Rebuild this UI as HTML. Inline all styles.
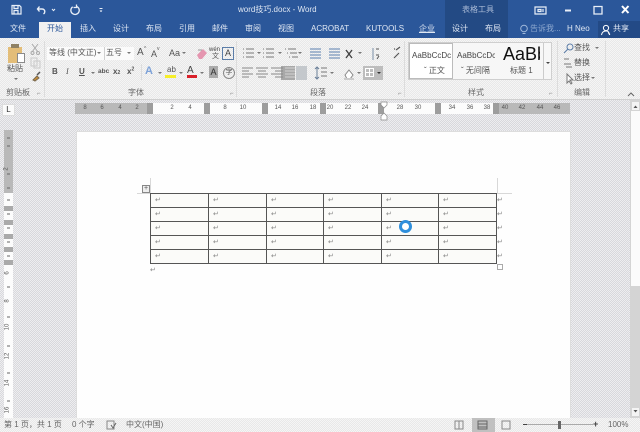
<!DOCTYPE html>
<html><head><meta charset="utf-8"><style>
html,body{margin:0;padding:0}
body{width:640px;height:432px;overflow:hidden;position:relative;background:#e4e4e4;font-family:"Liberation Sans","Noto Sans CJK SC",sans-serif;font-size:8px;color:#555}
.a{position:absolute}
.t{position:absolute;white-space:nowrap;line-height:1}
.w{color:#dfe7f3}
.dith{background-color:#e2e2e5;background-image:conic-gradient(#d8d8dc 25%,#eeeef0 0 50%,#d8d8dc 0 75%,#eeeef0 0);background-size:2px 2px}
.dl{background-color:#eeeeee;background-image:conic-gradient(#e8e8e8 25%,#f5f5f5 0 50%,#e8e8e8 0 75%,#f5f5f5 0);background-size:2px 2px}
.sep{position:absolute;top:41px;height:56px;width:1px;background:#dcdcdc}
.rn{position:absolute;top:104px;font-size:6px;line-height:9px;color:#555;transform:translateX(-50%)}
.mk{position:absolute;top:103px;height:11px;width:6px;background:#9d9d9d}
.cr{position:absolute;font-size:7px;color:#888;line-height:1}
.bl{position:absolute;background:#555}
.dd{position:absolute;width:0;height:0;border:2px solid transparent;border-top:2.5px solid #777;border-bottom:0}
.vn{position:absolute;left:5px;font-size:6px;line-height:6px;color:#555;transform:rotate(-90deg)}
svg{position:absolute;overflow:visible}
</style></head><body>

<!-- title bar -->
<div class="a" style="left:0;top:0;width:640px;height:38px;background:#2b579a"></div>
<div class="a" style="left:445px;top:0;width:63px;height:38px;background:#234a84"></div>
<div class="a" style="left:598px;top:21px;width:42px;height:17px;background:#234a86"></div>

<svg style="left:0;top:0" width="640" height="20" fill="none" stroke="#e8eef7" stroke-width="1.2">
<path d="M12 5.500h7.500l1.500 1.500v7h-9zM14 5.500v3h4v-3M14 14v-3.500h4V14"/>
<path d="M39.500 6.500l-2 2.500 2 2.500M38 9h4c2 0 2.800 1.300 2.800 2.600 0 1-.5 1.800-1.300 2.400" stroke-width="1.400"/>
<path d="M52 9l1.500 1.600L55 9" stroke-width="1"/>
<path d="M76 6.200a4.200 4.200 0 1 1-3.300.6M76.500 4.500v3h-3" stroke-width="1.300"/>
<path d="M99.500 8.500h3M100 10.500l1 1 1-1" stroke-width=".9"/>
<path d="M535 7h11v7h-11zM538 9.500h3v2h-3zM543 9v3" stroke-width="1.200"/>
<path d="M565 10.500h6" stroke-width="2"/>
<path d="M594 6.500h8v7.500h-8z" stroke-width="1.300"/>
<path d="M622 6l6.500 7M628.500 6l-6.500 7" stroke-width="2" stroke="#fff"/>
</svg>
<div class="t w" style="left:238px;top:6px;font-size:8px">word技巧.docx - Word</div>
<div class="t w" style="left:462px;top:6px;font-size:8px;color:#a9bad6">表格工具</div>

<!-- tabs -->
<div class="a" style="left:39px;top:22px;width:32px;height:17px;background:#f1f1f1"></div>
<div class="t w" style="left:10px;top:25px">文件</div>
<div class="t" style="left:47px;top:25px;color:#2b579a">开始</div>
<div class="t w" style="left:80px;top:25px">插入</div>
<div class="t w" style="left:113px;top:25px">设计</div>
<div class="t w" style="left:146px;top:25px">布局</div>
<div class="t w" style="left:179px;top:25px">引用</div>
<div class="t w" style="left:212px;top:25px">邮件</div>
<div class="t w" style="left:245px;top:25px">审阅</div>
<div class="t w" style="left:278px;top:25px">视图</div>
<div class="t w" style="left:311px;top:25px;font-size:8px">ACROBAT</div>
<div class="t w" style="left:366px;top:25px;font-size:8px">KUTOOLS</div>
<div class="t w" style="left:419px;top:25px;text-decoration:underline">企业</div>
<div class="t w" style="left:452px;top:25px">设计</div>
<div class="t w" style="left:485px;top:25px">布局</div>
<svg style="left:519px;top:24px" width="10" height="12" fill="none" stroke="#9fb8da"><circle cx="5" cy="4.500" r="3.300"/><path d="M3.500 9.500h3"/></svg>
<div class="t" style="left:530px;top:25px;color:#8ea8cf">告诉我...</div>
<div class="t w" style="left:567px;top:25px;font-size:8px">H Neo</div>
<svg style="left:601px;top:24px" width="10" height="12" fill="none" stroke="#fff"><circle cx="5" cy="4" r="2.600"/><path d="M.5 11c.5-3 2-4 4.500-4s3 1 3.500 4M7 8.500l2 2" /></svg>
<div class="t w" style="left:613px;top:25px">共享</div>

<!-- ribbon -->
<div class="a dl" style="left:0;top:38px;width:640px;height:61px"></div>
<div class="a" style="left:0;top:99px;width:640px;height:1px;background:#d0d0d0"></div>
<div class="sep" style="left:44px"></div><div class="sep" style="left:236px"></div><div class="sep" style="left:404px"></div><div class="sep" style="left:557px"></div><div class="sep" style="left:605px"></div>

<!-- clipboard -->
<div class="a" style="left:8px;top:47px;width:14px;height:16px;background:#e3bd78"></div>
<div class="a" style="left:11px;top:44px;width:8px;height:4px;background:#8f8163"></div>
<div class="a" style="left:17px;top:53px;width:8px;height:10px;background:#fff;border:1px solid #8a8a8a;box-sizing:border-box"></div>
<div class="t" style="left:7px;top:65px;font-size:8px">粘贴</div>
<div class="dd" style="left:14px;top:78px"></div>
<svg style="left:30px;top:42px" width="12" height="40" fill="none" stroke="#a9a9a9"><path d="M2 2l6 8M8 2L2 10"/><circle cx="2.500" cy="11" r="1.500"/><circle cx="8" cy="11" r="1.500"/><path d="M1 16h6v8H1zM4 19h6v7H4z" stroke="#c9c9c9"/><path d="M3 38l4-4 2 2-4 3z" fill="#c98f3a" stroke="#7a6a50"/><path d="M7 33l3-3" stroke="#555" stroke-width="1.500"/></svg>
<div class="t" style="left:6px;top:89px;color:#666">剪贴板</div>
<div class="t" style="left:37px;top:91px;font-size:6px;color:#888">⌐</div>

<!-- font -->
<div class="a" style="left:47px;top:47px;width:87px;height:13px;background:#fbfbfb"></div>
<div class="a" style="left:104px;top:47px;width:1px;height:13px;background:#cfcfcf"></div>
<div class="t" style="left:49px;top:49px">等线 (中文正)</div><div class="dd" style="left:97px;top:52px"></div>
<div class="t" style="left:106px;top:49px">五号</div><div class="dd" style="left:127px;top:52px"></div>
<div class="t" style="left:137px;top:48px;font-size:10px">A</div><div class="t" style="left:144px;top:47px;font-size:5px">^</div>
<div class="t" style="left:151px;top:50px;font-size:9px">A</div><div class="t" style="left:157px;top:47px;font-size:5px">v</div>
<div class="t" style="left:169px;top:49px;font-size:9px">Aa</div><div class="dd" style="left:182px;top:52px"></div>
<svg style="left:196px;top:47px" width="12" height="13"><path d="M1 8l6-6 4 4-5 6H3z" fill="#e596b0"/><path d="M2 3h4" stroke="#999"/></svg>
<div class="t" style="left:209px;top:47px;font-size:6px;color:#444">wén</div><div class="t" style="left:212px;top:53px;font-size:7px">文</div>
<div class="a" style="left:222px;top:47px;width:12px;height:13px;border:1px solid #5b7da8;box-sizing:border-box;font-size:9px;line-height:11px;text-align:center;color:#444">A</div>

<div class="t" style="left:52px;top:68px;font-size:8px;font-weight:bold">B</div>
<div class="t" style="left:66px;top:68px;font-size:8px;font-style:italic;font-family:'Liberation Serif'">I</div>
<div class="t" style="left:79px;top:68px;font-size:8px;text-decoration:underline;font-weight:bold">U</div><div class="dd" style="left:91px;top:72px"></div>
<div class="t" style="left:98px;top:69px;font-size:6.500px;font-weight:bold">abc</div>
<div class="t" style="left:113px;top:68px;font-size:8px;font-weight:bold">x<span style="font-size:5px">2</span></div>
<div class="t" style="left:127px;top:68px;font-size:8px;font-weight:bold">x<sup style="font-size:5px;line-height:0">2</sup></div>
<div class="a" style="left:141px;top:64px;width:1px;height:16px;background:#dcdcdc"></div>
<div class="t" style="left:145px;top:66px;font-size:11px;color:#7da2d8;font-weight:bold">A</div><div class="dd" style="left:158px;top:72px"></div>
<div class="t" style="left:167px;top:66px;font-size:8px;color:#555">ab</div><div class="a" style="left:165px;top:75px;width:11px;height:3px;background:#f6ee2a"></div><div class="dd" style="left:179px;top:72px"></div>
<div class="t" style="left:187px;top:66px;font-size:10px;color:#444">A</div><div class="a" style="left:187px;top:75px;width:10px;height:3px;background:#d9202a"></div><div class="dd" style="left:200px;top:72px"></div>
<div class="a" style="left:209px;top:66px;width:9px;height:12px;background:#aaa;font-size:9px;line-height:12px;text-align:center;color:#333">A</div>
<div class="a" style="left:223px;top:67px;width:10px;height:10px;border:1px solid #888;border-radius:50%;font-size:7px;line-height:10px;text-align:center">字</div>
<div class="t" style="left:128px;top:89px;color:#666">字体</div>
<div class="t" style="left:230px;top:91px;font-size:6px;color:#888">⌐</div>

<!-- paragraph -->
<div class="a" style="left:281px;top:66px;width:14px;height:14px;background:#a8a8a8"></div>
<div class="a" style="left:296px;top:66px;width:11px;height:14px;background:#c4c8cc"></div>
<svg style="left:240px;top:46px" width="165" height="36" fill="none" stroke="#777">
<path d="M3 3h1M6 3h8M3 7h1M6 7h8M3 11h1M6 11h8"/>
<path d="M23 3h1M26 3h8M23 7h1M26 7h8M23 11h1M26 11h8"/>
<path d="M45 3h1M48 3h8M47 7h1M50 7h7M49 11h1M52 11h6"/>
<path d="M70 3h11M70 6h11M70 9h11M70 12h11" stroke="#5a7fb0"/>
<path d="M89 3h11M89 6h11M89 9h11M89 12h11" stroke="#5a7fb0"/>
<path d="M106 4l3 4 3-4M106 12l3-4 3 4" stroke="#444" stroke-width="1.400"/>
<path d="M133 2v12" stroke="#7a8fa8"/><path d="M136 3h3M136 9h3M137 13l2-3" stroke="#555"/>
<path d="M156 4l4-3M154 12l5-5M154 3h1" stroke="#555" stroke-width="1.200"/>
<path d="M2 22h11M2 25h7M2 28h11M2 31h7" stroke="#888"/>
<path d="M16 22h12M18 25h8M16 28h12M18 31h8" stroke="#888"/>
<path d="M31 22h12M35 25h8M31 28h12M35 31h8" stroke="#888"/>
<path d="M45 22h10M45 25h10M45 28h10M45 31h10" stroke="#fff" stroke-opacity=".5"/>
</svg>
<svg style="left:314px;top:66px" width="90" height="15" fill="none" stroke="#6a7f98"><path d="M3 1v12M1 3l2-2 2 2M1 11l2 2 2-2"/><path d="M7 2h6M7 6h6M7 10h6" stroke="#777"/><path d="M31 9l4-5 4 5-3 4h-3z" fill="#fff" stroke="#888"/><path d="M30 13h10" stroke="#ccc" stroke-width="2"/></svg>
<div class="dd" style="left:257px;top:52px"></div><div class="dd" style="left:278px;top:52px"></div><div class="dd" style="left:298px;top:52px"></div>
<div class="dd" style="left:358px;top:52px"></div>
<div class="dd" style="left:330px;top:72px"></div><div class="dd" style="left:357px;top:72px"></div>
<div class="a" style="left:363px;top:66px;width:20px;height:14px;background:#bdbdbd"></div>
<div class="a" style="left:365px;top:68px;width:9px;height:9px;border:1px solid #fff;box-sizing:border-box;background:linear-gradient(#fff,#fff) 3px 0/1px 100% no-repeat,linear-gradient(#fff,#fff) 0 3px/100% 1px no-repeat"></div>
<div class="dd" style="left:377px;top:72px;border-top-color:#333"></div>
<div class="t" style="left:310px;top:89px;color:#666">段落</div>
<div class="t" style="left:398px;top:91px;font-size:6px;color:#888">⌐</div>

<!-- styles -->
<div class="a" style="left:408px;top:42px;width:144px;height:38px;background:#f7f7f7;border:1px solid #cfcfcf;box-sizing:border-box"></div>
<div class="a" style="left:409px;top:43px;width:44px;height:36px;background:#fff;border:1px solid #bbb;box-sizing:border-box"></div>
<div class="t" style="left:412px;top:52px;width:39px;overflow:hidden;font-size:8px;color:#444">AaBbCcDc</div>
<div class="t" style="left:457px;top:52px;width:38px;overflow:hidden;font-size:8px;color:#444">AaBbCcDc</div>
<div class="t" style="left:503px;top:45px;width:37px;overflow:hidden;font-size:18px;color:#111">AaBb</div>
<div class="t" style="left:424px;top:67px">ˇ 正文</div>
<div class="t" style="left:461px;top:67px">ˇ 无间隔</div>
<div class="t" style="left:510px;top:67px">标题 1</div>
<div class="a" style="left:543px;top:43px;width:1px;height:36px;background:#ccc"></div>
<div class="dd" style="left:546px;top:62px;border-top-color:#444"></div>
<div class="t" style="left:468px;top:89px;color:#666">样式</div>
<div class="t" style="left:549px;top:91px;font-size:6px;color:#888">⌐</div>

<!-- edit -->
<svg style="left:562px;top:43px" width="14" height="44" fill="none" stroke="#5b7da8"><circle cx="8" cy="4" r="3"/><path d="M6 6l-4 4"/><path d="M2 16h5M2 21h7M4 24h6" stroke="#777"/><path d="M5 31l0 9 2-2 2 3 1-1-2-3h3z" stroke="#777" fill="#fff"/></svg>
<div class="t" style="left:574px;top:44px">查找</div><div class="dd" style="left:595px;top:47px"></div>
<div class="t" style="left:574px;top:59px">替换</div>
<div class="t" style="left:574px;top:74px">选择</div><div class="dd" style="left:591px;top:77px"></div>
<div class="t" style="left:574px;top:89px;color:#666">编辑</div>
<svg style="left:627px;top:92px" width="9" height="5" fill="none" stroke="#666"><path d="M1 4l3-3 3 3"/></svg>

<!-- doc area -->
<div class="a dith" style="left:0;top:100px;width:640px;height:318px"></div>
<div class="a" style="left:77px;top:132px;width:493px;height:286px;background:#fefefe;box-shadow:0 0 0 1px #ddd"></div>

<!-- rulers -->
<div class="a" style="left:2px;top:104px;width:13px;height:12px;background:#fbfbfb;border:1px solid #ddd;box-sizing:border-box;font-size:8px;line-height:10px;text-align:center;color:#333">L</div>
<div class="a" style="left:75px;top:103px;width:75px;height:11px;background:#b9b9b9"></div>
<div class="a" style="left:150px;top:103px;width:346px;height:11px;background:#fcfcfc"></div>
<div class="a" style="left:496px;top:103px;width:74px;height:11px;background:#b9b9b9"></div>
<div class="mk" style="left:147px"></div><div class="mk" style="left:204px"></div><div class="mk" style="left:262px"></div><div class="mk" style="left:320px"></div><div class="mk" style="left:378px"></div><div class="mk" style="left:435px"></div><div class="mk" style="left:493px"></div>
<div class="rn" style="left:85px">8</div><div class="rn" style="left:102px">6</div><div class="rn" style="left:120px">4</div><div class="rn" style="left:137px">2</div>
<div class="rn" style="left:172px">2</div><div class="rn" style="left:190px">4</div><div class="rn" style="left:225px">8</div><div class="rn" style="left:243px">10</div><div class="rn" style="left:278px">14</div><div class="rn" style="left:295px">16</div><div class="rn" style="left:313px">18</div><div class="rn" style="left:330px">20</div><div class="rn" style="left:348px">22</div><div class="rn" style="left:365px">24</div><div class="rn" style="left:400px">28</div><div class="rn" style="left:418px">30</div><div class="rn" style="left:452px">34</div><div class="rn" style="left:470px">36</div><div class="rn" style="left:487px">38</div><div class="rn" style="left:505px">40</div><div class="rn" style="left:522px">42</div><div class="rn" style="left:540px">44</div><div class="rn" style="left:557px">46</div>
<svg style="left:380px;top:101px" width="8" height="19" fill="#fff" stroke="#888" stroke-width=".7"><path d="M1 1h6v3L4 7 1 4z"/><path d="M1 15l3-3 3 3v4H1z"/></svg>

<div class="a" style="left:4px;top:130px;width:9px;height:288px;background:#fcfcfc"></div>
<div class="a" style="left:4px;top:130px;width:9px;height:63px;background:#b9b9b9"></div>
<div class="a" style="left:4px;top:206px;width:9px;height:5px;background:#aaa"></div>
<div class="a" style="left:4px;top:220px;width:9px;height:5px;background:#aaa"></div>
<div class="a" style="left:4px;top:234px;width:9px;height:5px;background:#aaa"></div>
<div class="a" style="left:4px;top:247px;width:9px;height:5px;background:#aaa"></div>
<div class="a" style="left:4px;top:260px;width:9px;height:5px;background:#aaa"></div>
<svg style="left:4px;top:130px" width="9" height="288" stroke="#666"><path d="M3 8h3M3 16h3M3 44h3M3 58h3M3 70h3M3 84h3M3 98h3M3 112h3M3 126h3M3 157h3M3 187h3M3 216h3M3 243h3M3 271h3"/></svg>
<div class="vn" style="left:5px;top:166px">2</div>
<div class="vn" style="left:6px;top:270px">6</div>
<div class="vn" style="left:6px;top:298px">8</div>
<div class="vn" style="left:4px;top:324px">10</div>
<div class="vn" style="left:4px;top:353px">12</div>
<div class="vn" style="left:4px;top:380px">14</div>
<div class="vn" style="left:4px;top:407px">16</div>

<!-- margin marks -->
<div class="a" style="left:137px;top:193px;width:13px;height:1px;background:#d8d8d8"></div>
<div class="a" style="left:150px;top:178px;width:1px;height:15px;background:#d8d8d8"></div>
<div class="a" style="left:497px;top:193px;width:15px;height:1px;background:#d8d8d8"></div>
<div class="a" style="left:497px;top:178px;width:1px;height:15px;background:#d8d8d8"></div>
<div class="a" style="left:142px;top:185px;width:8px;height:8px;background:#eee;border:1px solid #888;box-sizing:border-box;font-size:7px;line-height:6px;text-align:center">+</div>

<!-- table -->
<div class="a" style="left:150px;top:193px;width:347px;height:71px;background:#fbfbf9"></div>
<div class="bl" style="left:150px;top:193px;width:347px;height:1px"></div>
<div class="bl" style="left:150px;top:207px;width:347px;height:1px"></div>
<div class="bl" style="left:150px;top:221px;width:347px;height:1px"></div>
<div class="bl" style="left:150px;top:235px;width:347px;height:1px"></div>
<div class="bl" style="left:150px;top:249px;width:347px;height:1px"></div>
<div class="bl" style="left:150px;top:263px;width:347px;height:1px"></div>
<div class="bl" style="left:150px;top:193px;width:1px;height:71px"></div>
<div class="bl" style="left:208px;top:193px;width:1px;height:71px"></div>
<div class="bl" style="left:266px;top:193px;width:1px;height:71px"></div>
<div class="bl" style="left:323px;top:193px;width:1px;height:71px"></div>
<div class="bl" style="left:381px;top:193px;width:1px;height:71px"></div>
<div class="bl" style="left:438px;top:193px;width:1px;height:71px"></div>
<div class="bl" style="left:496px;top:193px;width:1px;height:71px"></div>

<div class="cr" style="left:155px;top:197px">↵</div><div class="cr" style="left:213px;top:197px">↵</div><div class="cr" style="left:271px;top:197px">↵</div><div class="cr" style="left:328px;top:197px">↵</div><div class="cr" style="left:386px;top:197px">↵</div><div class="cr" style="left:443px;top:197px">↵</div><div class="cr" style="left:497px;top:197px">↵</div>
<div class="cr" style="left:155px;top:211px">↵</div><div class="cr" style="left:213px;top:211px">↵</div><div class="cr" style="left:271px;top:211px">↵</div><div class="cr" style="left:328px;top:211px">↵</div><div class="cr" style="left:386px;top:211px">↵</div><div class="cr" style="left:443px;top:211px">↵</div><div class="cr" style="left:497px;top:211px">↵</div>
<div class="cr" style="left:155px;top:225px">↵</div><div class="cr" style="left:213px;top:225px">↵</div><div class="cr" style="left:271px;top:225px">↵</div><div class="cr" style="left:328px;top:225px">↵</div><div class="cr" style="left:386px;top:225px">↵</div><div class="cr" style="left:443px;top:225px">↵</div><div class="cr" style="left:497px;top:225px">↵</div>
<div class="cr" style="left:155px;top:239px">↵</div><div class="cr" style="left:213px;top:239px">↵</div><div class="cr" style="left:271px;top:239px">↵</div><div class="cr" style="left:328px;top:239px">↵</div><div class="cr" style="left:386px;top:239px">↵</div><div class="cr" style="left:443px;top:239px">↵</div><div class="cr" style="left:497px;top:239px">↵</div>
<div class="cr" style="left:155px;top:253px">↵</div><div class="cr" style="left:213px;top:253px">↵</div><div class="cr" style="left:271px;top:253px">↵</div><div class="cr" style="left:328px;top:253px">↵</div><div class="cr" style="left:386px;top:253px">↵</div><div class="cr" style="left:443px;top:253px">↵</div><div class="cr" style="left:497px;top:253px">↵</div>
<div class="cr" style="left:150px;top:267px">↵</div>
<div class="a" style="left:497px;top:264px;width:4px;height:4px;border:1px solid #aaa;background:#fff"></div>

<!-- busy cursor -->
<div class="a" style="left:399px;top:220px;width:13px;height:13px;box-sizing:border-box;border:3px solid #2f8fdc;border-radius:50%;background:#fff"></div>

<!-- scrollbar -->
<div class="a" style="left:630px;top:100px;width:10px;height:318px;background:#d4d4d4"></div>
<div class="a" style="left:631px;top:111px;width:9px;height:175px;background:#fbfbfb"></div>
<div class="a" style="left:632px;top:102px;width:7px;height:8px;background:#f4f4f4"></div>
<div class="a" style="left:632px;top:408px;width:7px;height:8px;background:#f4f4f4"></div>
<svg style="left:631px;top:100px" width="9" height="318" fill="#555"><path d="M2.500 8l2-2.500 2 2.500zM2.500 310l2 2.500 2-2.500z"/></svg>

<!-- status bar -->
<div class="a dl" style="left:0;top:418px;width:640px;height:14px"></div>
<div class="t" style="left:4px;top:421px;color:#666">第 1 页，共 1 页</div>
<div class="t" style="left:72px;top:421px;color:#666">0 个字</div>
<svg style="left:106px;top:420px" width="10" height="10" fill="none" stroke="#888"><path d="M1 1h7v8H1z"/><path d="M5 5l2 3 3-5" stroke="#666"/></svg>
<div class="t" style="left:126px;top:421px;color:#666">中文(中国)</div>
<div class="a" style="left:472px;top:418px;width:23px;height:14px;background:#c0c0c0"></div>
<svg style="left:455px;top:420px" width="80" height="10" fill="none" stroke="#888"><path d="M0 1h8v8H0zM4 1v8"/><path d="M23 1h9v8h-9zM23 4h9M23 7h9" stroke="#666"/><path d="M47 1h8v8h-8z"/></svg>
<div class="a" style="left:523px;top:424px;width:4px;height:1px;background:#444"></div>
<div class="a" style="left:527px;top:424px;width:66px;height:1px;background:#aaa"></div>
<div class="a" style="left:558px;top:421px;width:3px;height:8px;background:#666"></div>
<div class="t" style="left:593px;top:420px;font-size:9px;font-weight:bold;color:#444">+</div>
<div class="t" style="left:608px;top:421px;color:#666">100%</div>
</body></html>
